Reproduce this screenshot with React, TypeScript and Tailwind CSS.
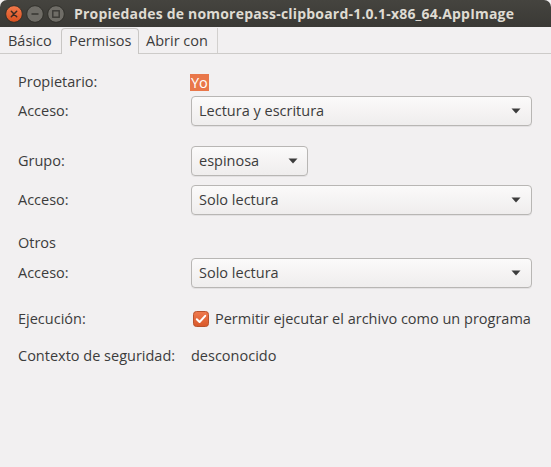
import type { ReactNode } from 'react'

const font = { fontFamily: '"Open Sans", "DejaVu Sans", sans-serif' }

function Caret() {
  return (
    <svg width="10" height="6" viewBox="0 0 10 6" className="shrink-0">
      <path d="M0.5 0.5h9L5 5.5z" fill="#3c3c3c" />
    </svg>
  )
}

function Combo({ value, wide = true }: { value: string; wide?: boolean }) {
  return (
    <div
      className={`flex h-[30px] items-center justify-between rounded-[4px] border border-[#b8b6b4] bg-gradient-to-b from-[#fbfafa] to-[#efeded] pl-[7px] shadow-[0_1px_0_rgba(0,0,0,0.06)] ${
        wide ? 'w-[341px] pr-[10px]' : 'w-[117px] pr-[9px]'
      }`}
    >
      <span className="text-[14.5px] text-[#3c3c3c]">{value}</span>
      <Caret />
    </div>
  )
}

function Row({ label, children, className = '' }: { label: string; children?: ReactNode; className?: string }) {
  return (
    <div className={`flex items-center ${className}`}>
      <div className="w-[173px] shrink-0 text-[14.5px] text-[#3c3c3c]">{label}</div>
      {children}
    </div>
  )
}

function TitleButtons() {
  return (
    <div className="flex items-center gap-[3px] pl-[5px]">
      <svg width="18" height="18" viewBox="0 0 18 18">
        <defs>
          <linearGradient id="cl" x1="0" y1="0" x2="0" y2="1">
            <stop offset="0" stopColor="#f27a4c" />
            <stop offset="1" stopColor="#d9501f" />
          </linearGradient>
        </defs>
        <circle cx="9" cy="9" r="8.3" fill="url(#cl)" stroke="#2a2925" strokeWidth="0.8" />
        <path d="M6.3 6.3l5.4 5.4M11.7 6.3l-5.4 5.4" stroke="#3a2a22" strokeWidth="1.5" strokeLinecap="round" />
      </svg>
      <svg width="18" height="18" viewBox="0 0 18 18">
        <circle cx="9" cy="9" r="8.3" fill="#6f6d67" stroke="#2a2925" strokeWidth="0.8" />
        <path d="M5.5 9h7" stroke="#3a3935" strokeWidth="1.6" />
      </svg>
      <svg width="18" height="18" viewBox="0 0 18 18">
        <circle cx="9" cy="9" r="8.3" fill="#6f6d67" stroke="#2a2925" strokeWidth="0.8" />
        <rect x="5.8" y="5.8" width="6.4" height="6.4" fill="none" stroke="#3a3935" strokeWidth="1.4" />
      </svg>
    </div>
  )
}

export default function App() {
  return (
    <div className="h-[467px] w-[551px] overflow-hidden bg-[#f2f0f1]" style={font}>
      <div className="flex h-[27px] items-center rounded-tr-[7px] rounded-tl-[7px] bg-gradient-to-b from-[#45443f] to-[#3a3935]">
        <TitleButtons />
        <div className="ml-[9px] whitespace-nowrap text-[14px] font-bold tracking-[0.2px] text-[#dfdbd2]">
          Propiedades de nomorepass-clipboard-1.0.1-x86_64.AppImage
        </div>
      </div>

      <div className="flex h-[27px] items-end border-b border-[#cdcbc9] text-[14.5px] text-[#3c3c3c]">
        <div className="flex h-[25px] w-[61px] items-center pl-[8px]">Básico</div>
        <div className="relative -mb-px flex h-[26px] w-[78px] items-start rounded-t-[4px] border border-b-0 border-[#c8c6c4] bg-[#f2f0f1] pl-[7px] pt-[1px]">
          Permisos
        </div>
        <div className="flex h-[25px] w-[79px] items-center border-r border-[#d2d0ce] pl-[7px]">Abrir con</div>
      </div>

      <div className="flex flex-col pl-[18px] pt-[18px]">
        <Row label="Propietario:" className="h-[20px]">
          <span className="ml-[-1px] bg-[#e9774a] px-[1px] text-[14.5px] leading-[17px] text-white">Yo</span>
        </Row>
        <Row label="Acceso:" className="mt-[4px]">
          <Combo value="Lectura y escritura" />
        </Row>
        <Row label="Grupo:" className="mt-[20px]">
          <Combo value="espinosa" wide={false} />
        </Row>
        <Row label="Acceso:" className="mt-[9px]">
          <Combo value="Solo lectura" />
        </Row>
        <div className="mt-[18px] flex h-[20px] items-center text-[14.5px] text-[#3c3c3c]">Otros</div>
        <Row label="Acceso:" className="mt-[5px]">
          <Combo value="Solo lectura" />
        </Row>
        <Row label="Ejecución:" className="mt-[21px] h-[20px]">
          <div className="ml-[2px] flex items-center gap-[6px] text-[14.5px] text-[#3c3c3c]">
            <svg width="16" height="16" viewBox="0 0 16 16">
              <defs>
                <linearGradient id="cb" x1="0" y1="0" x2="0" y2="1">
                  <stop offset="0" stopColor="#ef7a4e" />
                  <stop offset="1" stopColor="#d9582a" />
                </linearGradient>
              </defs>
              <rect x="0.5" y="0.5" width="15" height="15" rx="3" fill="url(#cb)" stroke="#b8532d" />
              <path d="M3.8 8.2l2.8 2.8 5.6-6.2" fill="none" stroke="#fff" strokeWidth="2" strokeLinecap="round" strokeLinejoin="round" />
            </svg>
            <span>Permitir ejecutar el archivo como un programa</span>
          </div>
        </Row>
        <Row label="Contexto de seguridad:" className="mt-[17px] h-[20px]">
          <span className="text-[14.5px] text-[#3c3c3c]">desconocido</span>
        </Row>
      </div>
    </div>
  )
}
